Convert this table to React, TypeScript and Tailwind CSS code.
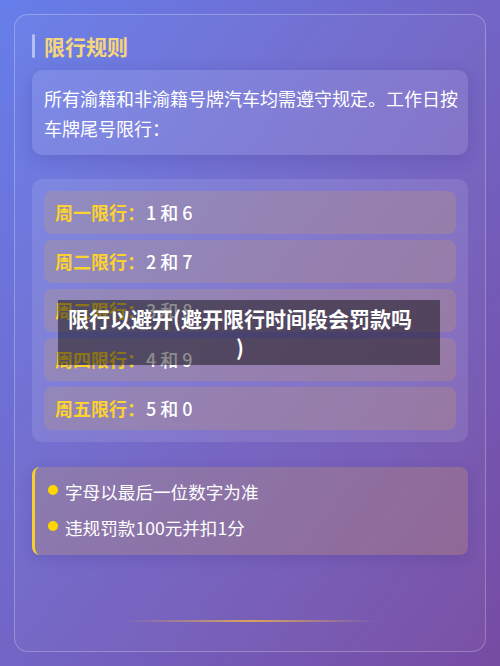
import React from "react";

const rows = [
  { label: "周一限行：", value: "1 和 6" },
  { label: "周二限行：", value: "2 和 7" },
  { label: "周三限行：", value: "3 和 8" },
  { label: "周四限行：", value: "4 和 9" },
  { label: "周五限行：", value: "5 和 0" },
];

const notes = ["字母以最后一位数字为准", "违规罚款100元并扣1分"];

export default function App() {
  return (
    <div
      className="relative min-h-[666px] w-[500px] bg-gradient-to-br from-[#667eea] to-[#764ba2] p-[14px]"
      style={{ fontFamily: '"Noto Sans CJK SC", "Noto Sans", sans-serif' }}
    >
      <div className="rounded-[14px] border border-white/25 bg-white/[0.03] px-[17px] pt-[19px] pb-[29px]">
        <div className="flex h-[24px] items-center gap-[9px]">
          <div className="h-[24px] w-[3px] rounded-full bg-white/50" />
          <h2 className="text-[21px] font-bold leading-[24px] text-[#f5d67c]">限行规则</h2>
        </div>

        <div className="mt-[12px] rounded-[10px] bg-white/10 pl-[12px] pr-[8px] pt-[13px] pb-[12px] text-[18px] leading-[30px] text-white shadow-[0_4px_18px_rgba(40,30,120,0.18)]">
          所有渝籍和非渝籍号牌汽车均需遵守规定。工作日按车牌尾号限行：
        </div>

        <div className="mt-[24px] flex flex-col gap-[6px] rounded-[10px] bg-white/10 p-[12px]">
          {rows.map((r) => (
            <div
              key={r.label}
              className="flex h-[43px] items-center rounded-[8px] bg-[rgba(215,165,80,0.22)] px-[11px] text-[18px]"
            >
              <span className="font-semibold text-[#fcd22f]">{r.label}</span>
              <span className="ml-[1px] font-medium text-white">{r.value}</span>
            </div>
          ))}
        </div>

        <div className="mt-[25px] flex flex-col rounded-[8px] border-l-[3px] border-[#f5cf2c] bg-[rgba(215,165,85,0.24)] pl-[13px] pt-[7px] pb-[9px] shadow-[0_4px_14px_rgba(40,30,120,0.15)]">
          {notes.map((n) => (
            <div key={n} className="flex h-[36px] items-center gap-[7px] text-[17.6px] text-white">
              <span className="relative top-[-2px] h-[10px] w-[10px] shrink-0 rounded-full bg-[#ffd600]" />
              <span>{n}</span>
            </div>
          ))}
        </div>

        <div className="mx-auto mt-[65px] h-[2px] w-[254px] bg-gradient-to-r from-transparent via-[#d9a35e] to-transparent" />
      </div>

      <div className="absolute left-[58px] top-[300px] flex h-[65px] w-[382px] flex-col justify-center bg-black/45 pl-[10px]">
        <div className="w-fit text-center text-[21px] font-bold leading-[29px] text-white">
          <div className="whitespace-nowrap">限行以避开(避开限行时间段会罚款吗</div>
          <div>)</div>
        </div>
      </div>
    </div>
  );
}
